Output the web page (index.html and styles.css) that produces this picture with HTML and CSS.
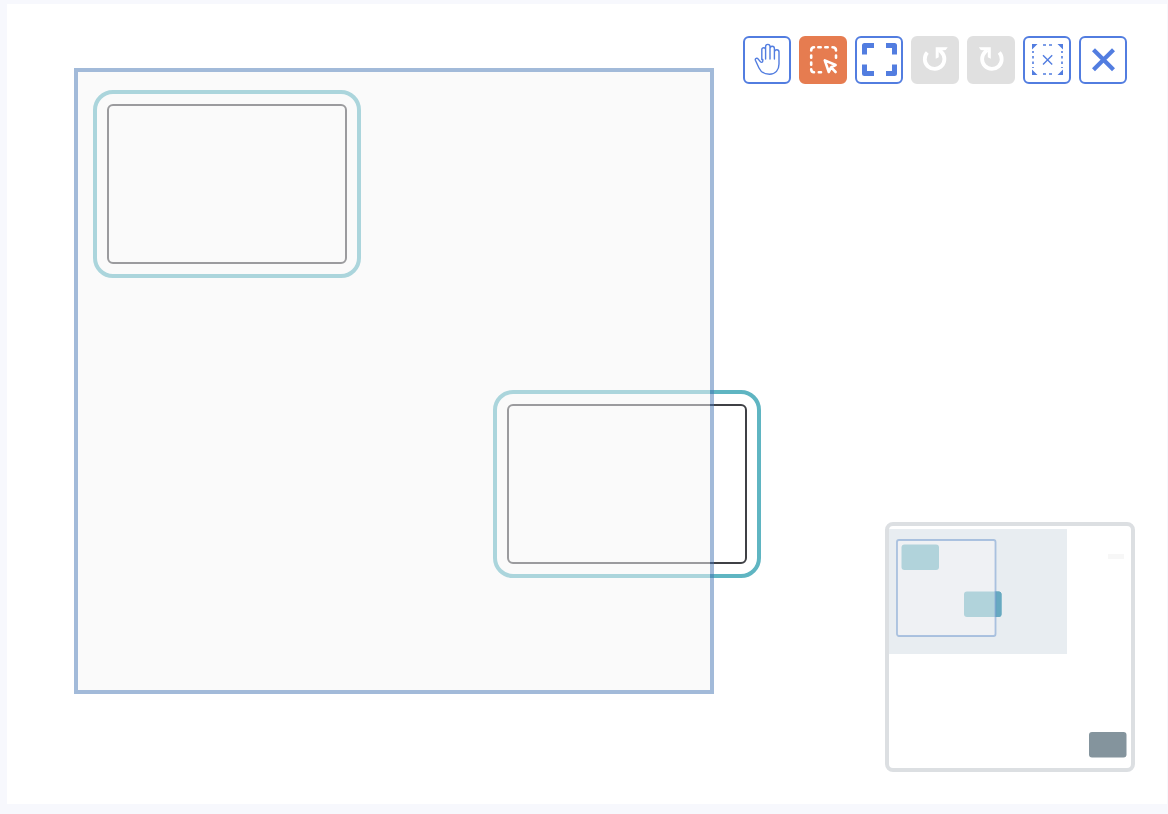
FILE: index.html
```
<!DOCTYPE html>
<html lang="en">
<head>
<meta charset="utf-8">
<meta name="viewport" content="width=device-width, initial-scale=1">
<title>Diagram</title>
<link rel="stylesheet" href="styles.css">
</head>
<body>
<main class="diagram">
  <div class="node node-first"></div>
  <div class="node node-second"></div>
  <div class="selection"></div>
  <div class="toolbar" role="toolbar" aria-label="Diagram tools">
    <button class="tool" type="button" aria-label="Pan">
      <svg viewBox="0 0 48 48" fill="none" stroke="currentColor" stroke-width="1.4" stroke-linecap="round" stroke-linejoin="round"><path d="M18.800 23.500V13.600a1.900 1.900 0 0 1 3.800 0V23M22.600 13V10.600a2.200 2.200 0 0 1 4.400 0V23M27 12.500a2.200 2.200 0 0 1 4.400 0V23M31.400 16a2.300 2.300 0 0 1 4.600 0V28c0 6-3.500 10.300-9.500 10.300-5.500 0-8.500-2-10.500-6.300l-3.600-7.800c-.6-1.800 1.600-2.600 2.900-1.100 1.500 1.700 1.700 3.300 3.300 3.300.9 0 1.200-.7 1.200-1.600v-1.300"/></svg>
    </button>
    <button class="tool tool-active" type="button" aria-label="Select area" aria-pressed="true">
      <svg viewBox="0 0 48 48" fill="none" stroke="currentColor" stroke-width="2.6" stroke-linecap="round" stroke-linejoin="round"><path d="M12.200 14.500c0-2 1-3.200 2.800-3.200M19.300 11.300h2.400M26.300 11.300h2.400M33.500 11.300c2.200 0 3.500 1 3.500 3.200M12.200 19.500v2.200M12.200 26.500v2.200M12.200 33.300c0 2 1 2.900 2.800 2.900M19.800 36.200h2.200M37 19.500v2.200"/><path d="m25.800 24.400 4 11.600 2.200-4.600 4.600-2.400zM32.200 31.400l4.400 4.600"/></svg>
    </button>
    <button class="tool" type="button" aria-label="Fit to screen">
      <svg viewBox="0 0 48 48" fill="none" stroke="currentColor" stroke-width="5" stroke-linejoin="round"><path d="M9.500 18.500v-9H19M31 9.500h8.500v9M39.500 28.500v9H31M19 37.500H9.500v-9"/></svg>
    </button>
    <button class="tool" type="button" aria-label="Undo" disabled>
      <svg viewBox="0 0 48 48" fill="none" stroke="currentColor" stroke-width="3.800"><path d="M16.300 16.600a9.800 9.800 0 1 0 14.200-.4l-2-2"/><path fill="currentColor" stroke="none" d="M24.700 11.200h12l-2 2.800-7 .8v6.500l-3 1.500z"/></svg>
    </button>
    <button class="tool" type="button" aria-label="Redo" disabled>
      <svg viewBox="0 0 48 48" fill="none" stroke="currentColor" stroke-width="3.800"><path d="M32.200 16.600a9.800 9.800 0 1 1-14.200-.4l2-2"/><path fill="currentColor" stroke="none" d="M23.800 11.200h-12l2 2.800 7 .8v6.500l3 1.500z"/></svg>
    </button>
    <button class="tool" type="button" aria-label="Clear selection">
      <svg viewBox="0 0 48 48" fill="none" stroke="currentColor" stroke-width="1.400"><path d="m20 19.200 9.200 9.200m0-9.200L20 28.400"/><path d="M20 9h3m3 0h3M20 38h3m3 0h3M10 15v2m0 3v2.500m0 3V28m0 3v1M39 15v2m0 3v2.500m0 3V28m0 3v1" stroke-width="1.600"/><path fill="currentColor" stroke="none" d="M9 8h5.500L9 13.500zM40 8v5.500L34.500 8zM9 39v-5.500l5.500 5.500zM40 39h-5.500l5.500-5.500z"/></svg>
    </button>
    <button class="tool" type="button" aria-label="Close">
      <svg viewBox="0 0 48 48" fill="none" stroke="currentColor" stroke-width="4.200"><path d="m14.500 13.800 20 20m0-20-20 20"/></svg>
    </button>
  </div>
  <div class="minimap">
    <svg viewBox="0 0 242 242" role="img" aria-label="Diagram overview">
      <path fill="#e8edf1" d="M0 3h178v125H0z"/>
      <path fill="#f7f7f7" d="M219 28h16v5h-16z"/>
      <g fill="#6cb0bf"><rect x="12.500" y="18.500" width="37.500" height="25.500" rx="3"/><rect x="75" y="65.500" width="37.500" height="25.500" rx="3"/></g>
      <path fill="#67a9c1" d="M105.500 65.500h4a3 3 0 0 1 3 3v19.500a3 3 0 0 1-3 3h-4z"/>
      <rect x="8" y="14" width="98.500" height="96" rx="2" fill="#f5f6f8" fill-opacity=".5"/>
      <rect x="8" y="14" width="98.500" height="96" rx="2" fill="none" stroke="#6894cb" stroke-opacity=".5" stroke-width="1.800"/>
      <rect x="200" y="206" width="37.500" height="25.500" rx="3" fill="#84949d"/>
    </svg>
  </div>
</main>
</body>
</html>
```
FILE: styles.css
```
* {
  box-sizing: border-box;
}

body {
  margin: 0;
  min-height: 100vh;
  padding: 4px 1px 10px 7px;
  display: flex;
  background: #f7f8fd;
  font-family: "Liberation Sans", Arial, sans-serif;
}

.diagram {
  position: relative;
  flex: 1;
  padding: 32px;
  padding-right: 40px;
  display: flex;
  flex-direction: column;
  justify-content: space-between;
  align-items: flex-end;
  background: #fff;
  overflow: hidden;
}

.node {
  position: absolute;
  width: 240px;
  height: 160px;
  border: 2px solid #3f4045;
  border-radius: 6px;
  background: #fff;
}

.node::before {
  content: "";
  position: absolute;
  inset: -16px;
  border: 4px solid #5fb5c2;
  border-radius: 20px;
}

.node-first {
  left: 100px;
  top: 100px;
}

.node-second {
  left: 500px;
  top: 400px;
}

.selection {
  position: absolute;
  left: 67px;
  top: 64px;
  width: 640px;
  height: 626px;
  border: 4px solid #4777b5;
  background: #f6f6f6;
  opacity: 0.5;
}

.toolbar {
  position: relative;
  display: flex;
  gap: 8px;
}

.tool {
  display: flex;
  width: 48px;
  height: 48px;
  padding: 0;
  border: 2px solid #527de0;
  border-radius: 6px;
  background: #fff;
  color: #527de0;
}

.tool svg {
  flex: none;
  width: 48px;
  height: 48px;
  margin: -2px;
}

.tool-active {
  border-color: #e67c50;
  background: #e67c50;
  color: #fff;
}

.tool:disabled {
  border-color: #e0e0e0;
  background: #e0e0e0;
  color: #fff;
}

.minimap {
  position: relative;
  width: 250px;
  height: 250px;
  margin-right: -8px;
  border: 4px solid #dcdfe2;
  border-radius: 8px;
  background: #fff;
  overflow: hidden;
}

.minimap svg {
  display: block;
  width: 100%;
}
```
